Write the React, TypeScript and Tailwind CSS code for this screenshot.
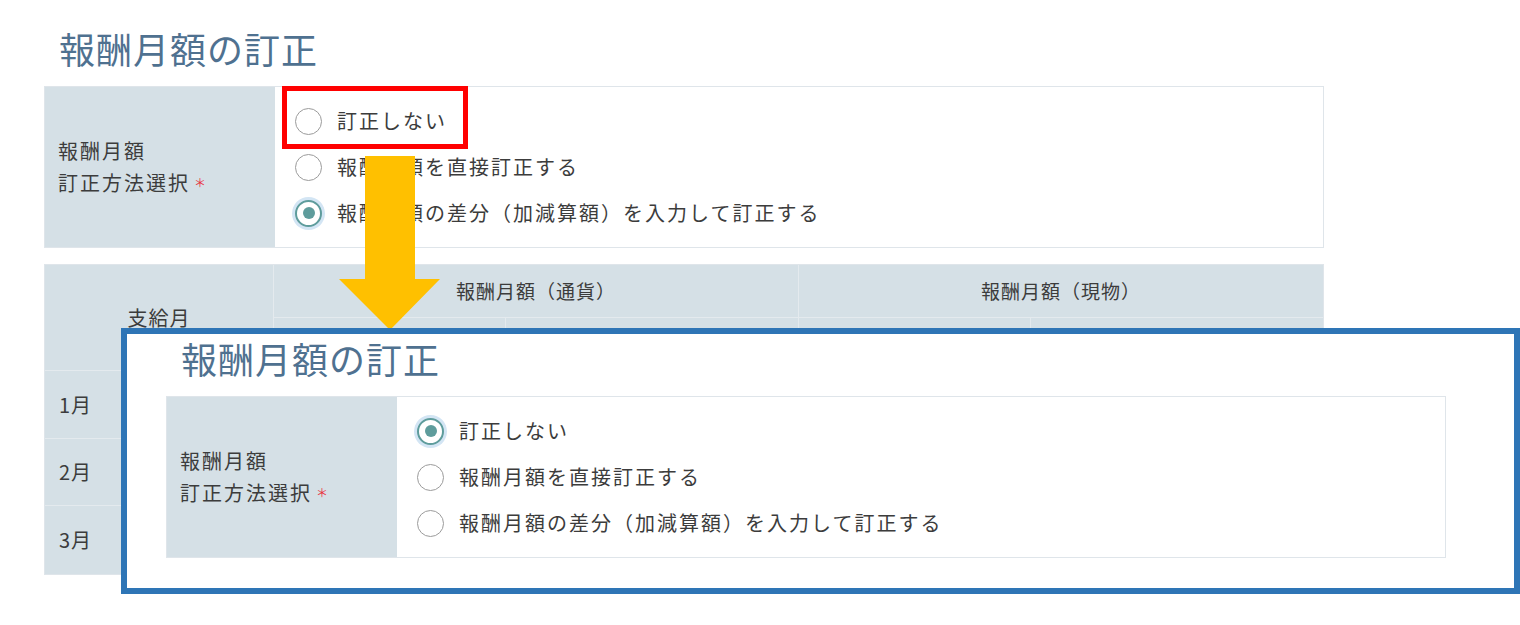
const options = ["訂正しない", "報酬月額を直接訂正する", "報酬月額の差分（加減算額）を入力して訂正する"]

function Radio({ checked }: { checked: boolean }) {
  if (checked) {
    return (
      <span className="flex h-[27px] w-[27px] shrink-0 items-center justify-center rounded-full border-2 border-[#5e9c9c] bg-white shadow-[0_0_0_3px_#d3e5f4]">
        <span className="h-[12px] w-[12px] rounded-full bg-[#5e9c9c]" />
      </span>
    )
  }
  return <span className="h-[27px] w-[27px] shrink-0 rounded-full border-[1.5px] border-[#9b9b9b] bg-white" />
}

// title + method selector, used for both the page and the zoomed overlay
function CorrectionForm({ selected }: { selected: number }) {
  return (
    <div>
      <h2 className="h-[56px] pl-[15px] text-[36px] leading-[37px] tracking-[1px] text-[#4f7190]">報酬月額の訂正</h2>
      <div className="flex h-[162px] w-[1280px] border border-[#dfe5ea]">
        <div className="flex w-[230px] flex-col justify-center bg-[#d5e0e6] pl-[13px] text-[20px] leading-[32px] tracking-[2px] text-[#3c3c3c]">
          <span>報酬月額</span>
          <span className="flex items-center">
            訂正方法選択
            <span className="ml-[4px] text-[12px] leading-none text-[#e8323c]">＊</span>
          </span>
        </div>
        <div className="flex flex-1 flex-col justify-center bg-white pl-[20px]">
          {options.map((o, i) => (
            <label key={o} className="flex h-[46px] items-center gap-[15px] text-[20px] tracking-[2px] text-[#3c3c3c]">
              <Radio checked={i === selected} />
              <span>{o}</span>
            </label>
          ))}
        </div>
      </div>
    </div>
  )
}

function PayTable() {
  const line = "border-[#e4eaee]"
  return (
    <div className="mt-[16px] w-[1280px] border border-[#dfe5ea] bg-[#d5e0e6] text-[#3c3c3c]">
      <div className="grid grid-cols-[229px_232px_293px_232px_292px] grid-rows-[53px_53px_68px_67px_68px]">
        <div className={`row-span-2 flex items-center justify-center border-r border-b ${line} text-[20px] tracking-[1px]`}>支給月</div>
        <div className={`col-span-2 flex items-center justify-center border-r border-b ${line} text-[19px] tracking-[1px]`}>報酬月額（通貨）</div>
        <div className={`col-span-2 flex items-center justify-center border-b ${line} text-[19px] tracking-[1px]`}>報酬月額（現物）</div>
        <div className={`border-r border-b ${line}`} />
        <div className={`border-r border-b ${line}`} />
        <div className={`border-r border-b ${line}`} />
        <div className={`border-b ${line}`} />
        {["1月", "2月", "3月"].map((m, r) => (
          <div key={m} className="contents">
            <div className={`flex items-center pl-[14px] text-[20px] tracking-[1px] ${r < 2 ? "border-b" : ""} border-r ${line}`}>{m}</div>
            <div className={`bg-white ${r < 2 ? "border-b" : ""} border-r ${line}`} />
            <div className={`bg-white ${r < 2 ? "border-b" : ""} border-r ${line}`} />
            <div className={`bg-white ${r < 2 ? "border-b" : ""} border-r ${line}`} />
            <div className={`bg-white ${r < 2 ? "border-b" : ""} ${line}`} />
          </div>
        ))}
      </div>
    </div>
  )
}

export default function App() {
  return (
    <div className="relative h-[625px] w-[1520px] overflow-hidden bg-white font-['Noto_Sans_CJK_JP','Noto_Sans',sans-serif]">
      <div className="pl-[44px] pt-[30px]">
        <CorrectionForm selected={2} />
        <PayTable />
      </div>

      {/* red highlight */}
      <div className="absolute left-[282px] top-[86px] h-[63px] w-[186px] border-[5px] border-[#ff0000]" />

      {/* arrow */}
      <svg className="absolute left-[339px] top-[156px]" width="102" height="175" viewBox="0 0 102 175">
        <path d="M26 0H76V123H101L51 174L0 123H26Z" fill="#ffc000" />
      </svg>

      {/* after-state overlay */}
      <div className="absolute left-[121px] top-[328px] h-[266px] w-[1399px] border-[6px] border-[#2e75b6] bg-white pl-[39px] pt-[6px]">
        <CorrectionForm selected={0} />
      </div>
    </div>
  )
}
